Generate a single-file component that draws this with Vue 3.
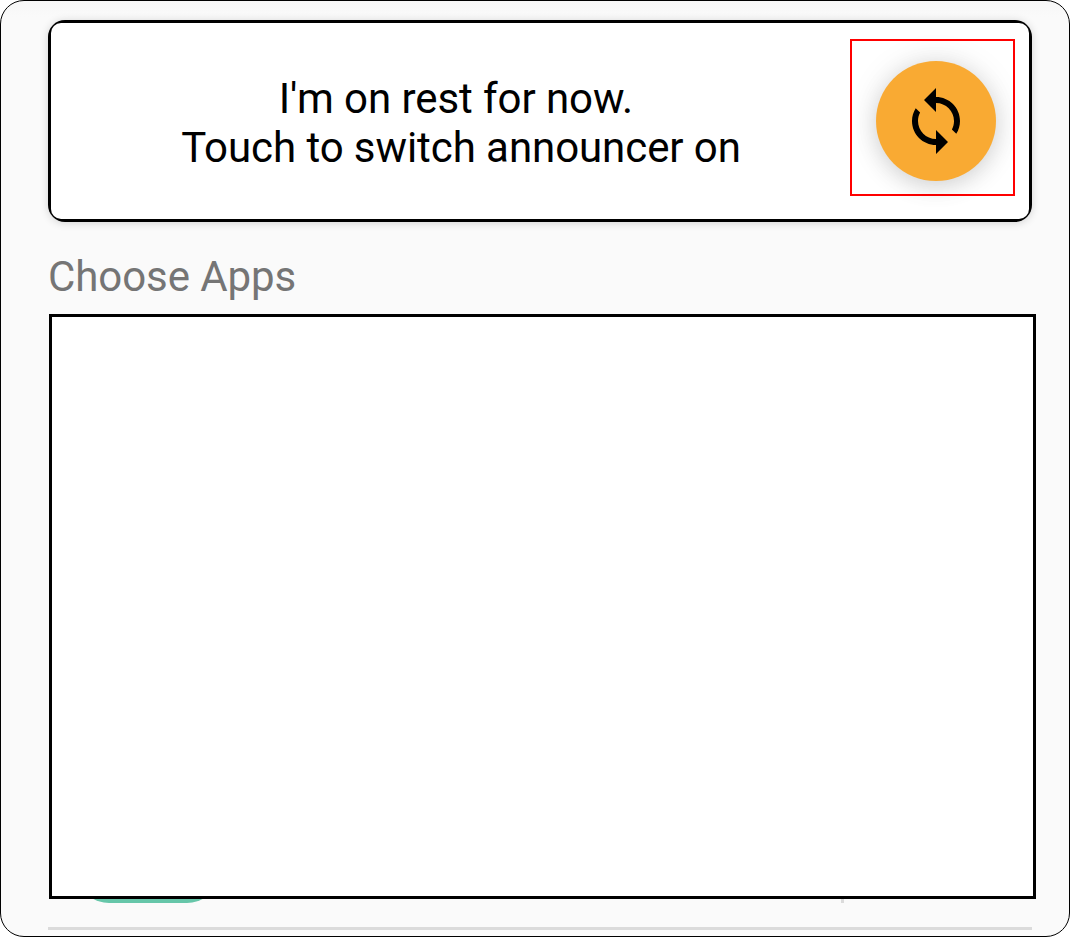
<script setup>
const lines = ["I'm on rest for now.\u00a0", 'Touch to switch announcer on']
</script>

<template>
  <main class="screen">
    <section class="card">
      <div class="card-body">
        <p class="message">
          <span v-for="line in lines" :key="line" class="line">{{ line }}</span>
        </p>
        <div class="highlight">
          <button class="fab" aria-label="Switch announcer">
            <svg width="72" height="72" viewBox="0 0 24 24">
              <path d="M12 4V1L8 5l4 4V6c3.31 0 6 2.69 6 6 0 1.01-.25 1.97-.7 2.8l1.46 1.46C19.54 15.03 20 13.57 20 12c0-4.42-3.58-8-8-8zm0 14c-3.31 0-6-2.69-6-6 0-1.01.25-1.97.7-2.8L5.24 7.74C4.46 8.97 4 10.43 4 12c0 4.42 3.58 8 8 8v3l4-4-4-4v3z" />
            </svg>
          </button>
        </div>
      </div>
    </section>
    <h2 class="heading">Choose Apps</h2>
    <section class="panel"></section>
    <div class="row-edge">
      <span class="app-icon"></span>
      <span class="separator"></span>
    </div>
    <hr class="divider" />
  </main>
</template>

<style>
body {
  background: #fff;
}
</style>

<style scoped>
.screen {
  box-sizing: border-box;
  width: 1070px;
  height: 937px;
  padding: 19px 0 0 47px;
  border: 1px solid #000;
  border-radius: 24px;
  background: linear-gradient(#f7f7f7, #fafafa 16px);
  overflow: hidden;
  font-family: Roboto, sans-serif;
  font-size: 42px;
  line-height: 49px;
  letter-spacing: -0.07px;
}
.card {
  box-sizing: border-box;
  width: 984px;
  height: 202px;
  padding: 3px;
  border-radius: 17px;
  background: #000;
  box-shadow: 0 1px 8px rgba(0, 0, 0, 0.16);
}
.card-body {
  display: flex;
  height: 196px;
  border-radius: 10px;
  background: #fff;
}
.message {
  width: 820px;
  margin: 51px 0 0;
  flex: none;
  text-align: center;
  color: #000;
}
.line {
  display: block;
  white-space: pre;
}
.highlight {
  box-sizing: border-box;
  width: 165px;
  height: 157px;
  margin: 16px 0 0 -21px;
  padding: 20px 0 0 24px;
  border: 2px solid #f00;
}
.fab {
  display: flex;
  align-items: center;
  justify-content: center;
  width: 120px;
  height: 120px;
  padding: 0;
  border: 0;
  border-radius: 50%;
  background: #f9aa33;
  box-shadow: 0 5px 22px rgba(0, 0, 0, 0.13), 0 0 34px rgba(0, 0, 0, 0.09);
}
.heading {
  margin: 30px 0 0;
  height: 62px;
  font-size: 42px;
  font-weight: 400;
  color: #757575;
}
.panel {
  box-sizing: border-box;
  width: 987px;
  height: 585px;
  margin-left: 1px;
  border: 3px solid #000;
  background: #fff;
}
.row-edge {
  display: flex;
  align-items: flex-end;
  width: 984px;
  height: 4px;
  overflow: hidden;
}
.app-icon {
  flex: none;
  width: 132px;
  height: 132px;
  margin-left: 34px;
  border-radius: 27px / 22px;
  background: #66c6a9;
}
.separator {
  width: 3px;
  height: 4px;
  margin-left: 627px;
  background: #dbdbdb;
}
.divider {
  width: 984px;
  height: 3px;
  margin: 24px 0 0;
  border: 0;
  background: #dbdbdb;
}
</style>
